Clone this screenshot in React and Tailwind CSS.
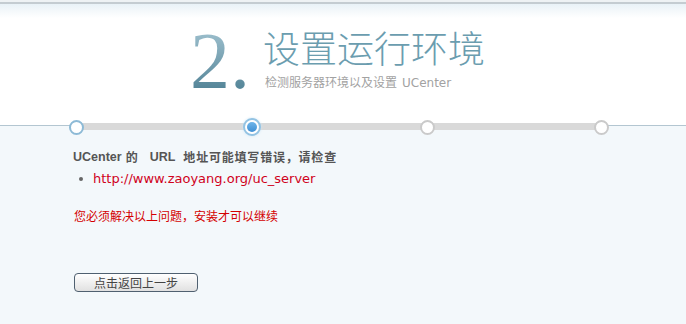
import React from "react";

const latin = { fontFamily: '"DejaVu Sans", "Noto Sans CJK SC", sans-serif' };
const cjk = { fontFamily: '"Noto Sans CJK SC", sans-serif' };
const arial = { fontFamily: '"Liberation Sans", sans-serif' };

function Step({ state }) {
  if (state === "active") {
    return (
      <div className="relative z-10 flex h-[18px] w-[18px] items-center justify-center rounded-full border-2 border-[#93c3e3] bg-white shadow-[0_0_3px_#cfe6f5]">
        <div className="h-[10px] w-[10px] rounded-full bg-linear-to-b from-[#6fb6ea] to-[#3f8fd3]" />
      </div>
    );
  }
  return (
    <div
      className={
        "relative z-10 h-[15px] w-[15px] rounded-full border-2 bg-white " +
        (state === "done" ? "border-[#8dbad6]" : "border-[#cacaca]")
      }
    />
  );
}

export default function App() {
  return (
    <div className="relative h-[324px] w-[686px] overflow-hidden bg-[#f3f8fb]" style={latin}>
      <div className="h-[126px] border-b border-[#b3c6d1] bg-white">
        <div className="h-[2px] bg-[#eef2f4]" />
        <div className="h-[2px] bg-[#c4ccd1]" />
        <div className="h-[14px] bg-linear-to-b from-[#e9f2f7] to-white" />
        <div className="mt-[3px] flex items-start pl-[190px]">
          <div
            className="bg-linear-to-b from-[#a9c9d6] to-[#467a8e] bg-clip-text text-[80px] leading-[80px] text-transparent"
            style={{ fontFamily: '"Liberation Serif", serif' }}
          >
            2.
          </div>
          <div className="ml-[13px] mt-[8px]">
            <div
              className="text-[37px] leading-[37px] text-[#6b9daf]"
              style={{ ...cjk, fontWeight: 300 }}
            >
              设置运行环境
            </div>
            <div className="ml-[2px] mt-[8px] text-[12px] leading-[16px] text-[#a2a2a2]">
              <span style={cjk}>检测服务器环境以及设置</span>
              <span className="ml-[5px]">UCenter</span>
            </div>
          </div>
        </div>
      </div>

      <div className="absolute left-[69px] top-[118px] flex w-[540px] items-center justify-between">
        <div className="absolute left-[7px] right-[7px] top-[5px] h-[7px] bg-[#d9d9d9]" />
        <Step state="done" />
        <Step state="active" />
        <Step state="todo" />
        <Step state="todo" />
      </div>

      <div className="pl-[73px]">
        <div className="mt-[21px] flex items-center text-[12px] font-bold leading-[20px] text-[#555]">
          <span className="text-[12.5px]" style={arial}>UCenter</span>
          <span className="ml-[4px]" style={cjk}>的</span>
          <span className="ml-[12px] text-[12.5px]" style={arial}>URL</span>
          <span className="ml-[8px] tracking-[0.8px]" style={cjk}>地址可能填写错误，请检查</span>
        </div>
        <div className="mt-[2px] flex items-center text-[13px] leading-[20px] text-[#d0021b]">
          <span className="ml-[6px] mr-[10px] h-[4px] w-[4px] rounded-full bg-[#666]" />
          http://www.zaoyang.org/uc_server
        </div>
        <div className="ml-[1px] mt-[17px] text-[12px] leading-[20px] text-[#d40000]" style={cjk}>
          您必须解决以上问题，安装才可以继续
        </div>
        <button className="ml-[1px] mt-[47px] flex h-[19px] w-[124px] items-center justify-center rounded-[4px] border border-[#4f6070] bg-linear-to-b from-white to-[#e1e1e1] text-[12px] leading-[16px] text-[#444]" style={cjk}>
          点击返回上一步
        </button>
      </div>
    </div>
  );
}
